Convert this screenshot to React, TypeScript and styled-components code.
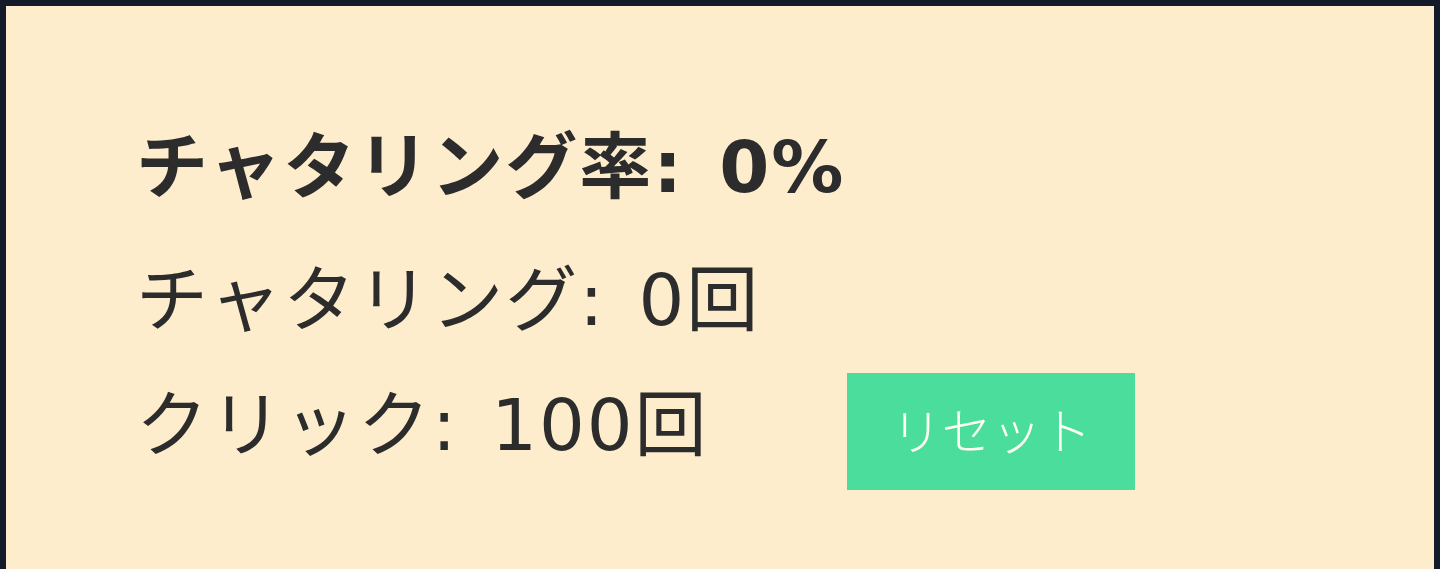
import React from "react";
import styled, { createGlobalStyle } from "styled-components";

const Global = createGlobalStyle`
  html, body { margin: 0; padding: 0; background: #111827; }
  body { font-family: "DejaVu Sans", "Noto Sans CJK JP", sans-serif; overflow: hidden; }
`;

const Card = styled.section`
  box-sizing: border-box;
  min-height: 700px;
  background: #feedcd;
  border: 6px solid #131a29;
  padding: 107px 130px 0;
  color: #2c2c2c;
`;

const Title = styled.h2`
  margin: 0 0 25px;
  font-size: 72px;
  line-height: 108px;
  font-weight: 700;
  letter-spacing: 2px;
  word-spacing: 8px;
`;

const Stat = styled.p`
  margin: 0 0 17px;
  font-size: 72px;
  line-height: 108px;
  font-weight: 400;
  letter-spacing: 2px;
  word-spacing: 8px;
`;

const Row = styled.div`
  display: flex;
  align-items: baseline;
  gap: 138px;
`;

const RowStat = styled(Stat)`
  margin: 0;
`;

const ResetButton = styled.button`
  box-sizing: border-box;
  height: 117px;
  padding: 0 43px 6px 45px;
  border: none;
  border-radius: 0;
  background: #4bdd9c;
  color: #fffff4;
  font-family: "Noto Sans CJK JP", sans-serif;
  font-size: 50px;
  font-weight: 300;
  line-height: 111px;
  cursor: pointer;
`;

export default function App() {
  return (
    <>
      <Global />
      <Card>
        <Title>チャタリング率: 0%</Title>
        <Stat>チャタリング: 0回</Stat>
        <Row>
          <RowStat>クリック: 100回</RowStat>
          <ResetButton>リセット</ResetButton>
        </Row>
      </Card>
    </>
  );
}
